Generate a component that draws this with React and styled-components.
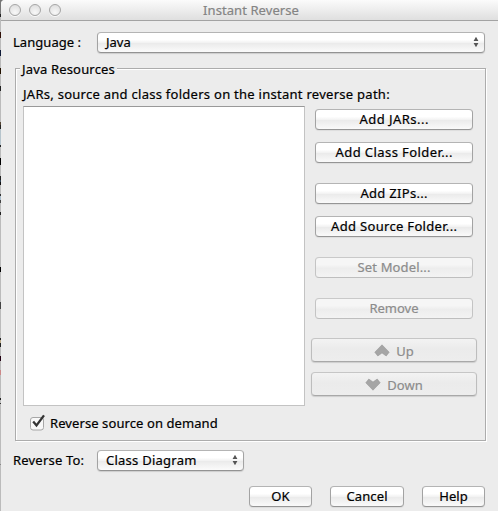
import React from "react";
import styled, { createGlobalStyle } from "styled-components";

const GlobalStyle = createGlobalStyle`
  *, *::before, *::after { box-sizing: border-box; }
  body { margin: 0; background: #bcbcbc; overflow: hidden; }
`;

const Desktop = styled.div`
  width: 498px;
  height: 511px;
  padding-left: 1px;
  background: linear-gradient(
    #777 0 14px, #222 14px 17px, #bbb 17px 32px, #301008 32px 38px, #bbb 38px 50px,
    #101c38 50px 56px, #bbb 56px 68px, #210 68px 74px, #bbb 74px 86px, #222 86px 91px,
    #bbb 91px 122px, #543 122px 125px, #222 125px 129px, #b6c4cc 129px 145px, #222 145px 147px,
    #bbb 147px 158px, #000 158px 165px, #bbb 165px 176px, #222 176px 180px, #345 180px 182px,
    #111 182px 185px, #bbb 185px 194px, #333 194px 196px, #a9bccb 196px 200px, #444 200px 203px,
    #bbb 203px 212px, #222 212px 215px, #bbb 215px 267px, #000 267px 272px, #bbb 272px 302px,
    #444 302px 309px, #bbb 309px 338px, #222 338px 340px, #ba8 340px 343px, #222 343px 347px,
    #bbb 347px 356px, #201 356px 361px, #bbb 361px 370px, #c88 370px 375px, #bbb 375px 398px,
    #222 398px 400px, #bbb 400px 403px, #333 403px 404px, #bbb 404px 464px, #888 464px 465px,
    #bbb 465px
  );
`;

const Dialog = styled.main`
  height: 511px;
  display: flex;
  flex-direction: column;
  background: #ececec;
  border-radius: 4px 0 0 0;
  overflow: hidden;
  color: #000;
  font: 13px/20px "Noto Sans", "Open Sans", sans-serif;
  -webkit-text-stroke: 0.2px;
  white-space: nowrap;
`;

const TitleBar = styled.header`
  height: 21px;
  flex: none;
  display: grid;
  grid-template-columns: 64px 1fr 64px;
  align-items: center;
  padding: 0 5px 0 8px;
  border-bottom: 1px solid #a3a3a3;
  background: linear-gradient(#fbfbfb, #dfdfdf);
`;

const Lights = styled.div`
  display: flex;
  gap: 8px;
`;

const Light = styled.i`
  width: 12px;
  height: 12px;
  border: 1px solid #a5a5a5;
  border-radius: 50%;
  background: radial-gradient(circle at 50% 75%, #f8f8f8, #dadada);
  box-shadow: 0 1px 0 #f8f8f8;
`;

const Title = styled.h1`
  margin: 0;
  text-align: center;
  font: inherit;
  color: #848484;
`;

const Text = styled.span`
  letter-spacing: ${(p) => p.$track || 0}px;
  margin-right: ${(p) => -(p.$track || 0)}px;
`;

const FormRow = styled.div`
  flex: none;
  height: 21px;
  display: grid;
  grid-template-columns: 84px auto;
  justify-content: start;
  align-items: start;
  margin: ${(p) => p.$top}px 0 0 12px;
`;

const Select = styled.div`
  width: ${(p) => p.$width}px;
  height: 21px;
  display: flex;
  align-items: center;
  justify-content: space-between;
  padding: 0 5px 2px 8px;
  border: 1px solid #a6a6a6;
  border-color: #b4b4b4 #a3a3a3 #939393;
  border-radius: 4px;
  background: linear-gradient(#fff 0 35%, #f3f3f3 50%, #ebebeb 55%, #fbfbfb);
  box-shadow: 0 1px 1px #0002;
`;

const Group = styled.section`
  flex: none;
  width: 471px;
  height: 373px;
  margin: 15px 0 0 14px;
  border: 1px solid #acacac;
  box-shadow: inset 1px 1px 0 #fff, 1px 1px 0 #fff;
`;

const Legend = styled.h2`
  width: max-content;
  height: 20px;
  margin: -10px 0 0 4px;
  padding: 0 2px 0 2px;
  background: #ececec;
  font: inherit;
`;

const Caption = styled.p`
  margin: 5px 0 2px 7px;
`;

const Columns = styled.div`
  display: flex;
  align-items: flex-start;
  margin-left: 7px;
`;

const ResourceList = styled.div`
  width: 282px;
  height: 300px;
  border: 1px solid #c3c3c3;
  border-top-color: #999;
  background: #fff;
`;

const Actions = styled.div`
  width: 166px;
  margin-left: 6px;
  padding-top: 3px;
  display: flex;
  flex-direction: column;
  align-items: center;
`;

const Button = styled.button`
  width: ${(p) => p.$width || 158}px;
  height: 21px;
  margin: ${(p) => p.$top || 0}px 0 0;
  padding: 0 0 1px;
  display: flex;
  align-items: center;
  justify-content: center;
  border: 1px solid;
  border-color: #b4b4b4 #a3a3a3 #959595;
  border-radius: 4px;
  background: linear-gradient(#fff 0 35%, #f3f3f3 50%, #ebebeb 55%, #fafafa);
  box-shadow: 0 1px 1px #0001;
  color: #000;
  font: inherit;

  &:disabled {
    color: #8c8c8c;
    border-color: #c9c9c9 #c4c4c4 #bebebe;
    background: linear-gradient(#f6f6f6 0 35%, #ededed 55%, #f3f3f3);
    box-shadow: none;
  }
`;

const MoveButton = styled(Button)`
  width: 166px;
  height: 24px;
  gap: 6px;
  padding: 2px 0 0;

  &:disabled {
    border-color: #c6c6c6 #bdbdbd #a8a8a8;
    background: linear-gradient(#f3f3f3, #ebebeb 45%, #ededed);
    box-shadow: 0 1px 1px #0002;
  }
`;

const CheckRow = styled.label`
  display: flex;
  align-items: center;
  gap: 4px;
  height: 20px;
  margin: 7px 0 0 14px;
`;

const Footer = styled.footer`
  flex: none;
  display: flex;
  justify-content: flex-end;
  gap: 18px;
  margin: 15px 13px 0 0;
`;

const Arrows = () => (
  <svg width="6" height="12" viewBox="0 0 6 12" fill="#555">
    <path d="M3 .8 5.4 5H.6ZM3 11.2 5.4 7H.6Z" />
  </svg>
);

const Chevron = ({ down }) => (
  <svg width="16" height="14" viewBox="0 0 16 14">
    <path
      transform={down ? "rotate(180 8 6.5)" : undefined}
      d="M8 .8 15.2 8.2 12.2 12 8 8.9 3.8 12 .8 8.2Z"
      fill="#a5a5a5"
      stroke="#989898"
      strokeWidth=".6"
      strokeLinejoin="round"
    />
  </svg>
);

const Check = () => (
  <svg width="16" height="18" viewBox="0 0 16 18">
    <rect x=".5" y="3.5" width="13" height="12.5" rx="2.5" fill="#f8f8f8" stroke="#a6a6a6" />
    <path d="M3.2 7.6 6.5 11.5 14 1.4" fill="none" stroke="#333" strokeWidth="2.3" />
  </svg>
);

export default function App() {
  return (
    <Desktop>
      <GlobalStyle />
      <Dialog>
        <TitleBar>
          <Lights><Light /><Light /><Light /></Lights>
          <Title><Text $track={0.08}>Instant Reverse</Text></Title>
        </TitleBar>
        <FormRow $top={11}>
          <Text $track={0.05}>Language :</Text>
          <Select $width={388}><Text>Java</Text><Arrows /></Select>
        </FormRow>
        <Group>
          <Legend><Text $track={0.17}>Java Resources</Text></Legend>
          <Caption><Text $track={0.27}>JARs, source and class folders on the instant reverse path:</Text></Caption>
          <Columns>
            <ResourceList />
            <Actions>
              <Button><Text $track={0.45}>Add JARs...</Text></Button>
              <Button $top={12}><Text $track={0.42}>Add Class Folder...</Text></Button>
              <Button $top={20}><Text $track={0.3}>Add ZIPs...</Text></Button>
              <Button $top={12}><Text $track={0.32}>Add Source Folder...</Text></Button>
              <Button $top={20} disabled><Text $track={0.15}>Set Model...</Text></Button>
              <Button $top={20} disabled><Text>Remove</Text></Button>
              <MoveButton $top={19} disabled><Chevron /><Text>Up</Text></MoveButton>
              <MoveButton $top={10} disabled><Chevron down /><Text>Down</Text></MoveButton>
            </Actions>
          </Columns>
          <CheckRow><Check /><Text $track={0.09}>Reverse source on demand</Text></CheckRow>
        </Group>
        <FormRow $top={9}>
          <Text $track={0.2}>Reverse To:</Text>
          <Select $width={147}><Text $track={0.25}>Class Diagram</Text><Arrows /></Select>
        </FormRow>
        <Footer>
          <Button $width={63}><Text $track={0.1}>OK</Text></Button>
          <Button $width={74}><Text $track={0.15}>Cancel</Text></Button>
          <Button $width={63}><Text>Help</Text></Button>
        </Footer>
      </Dialog>
    </Desktop>
  );
}
